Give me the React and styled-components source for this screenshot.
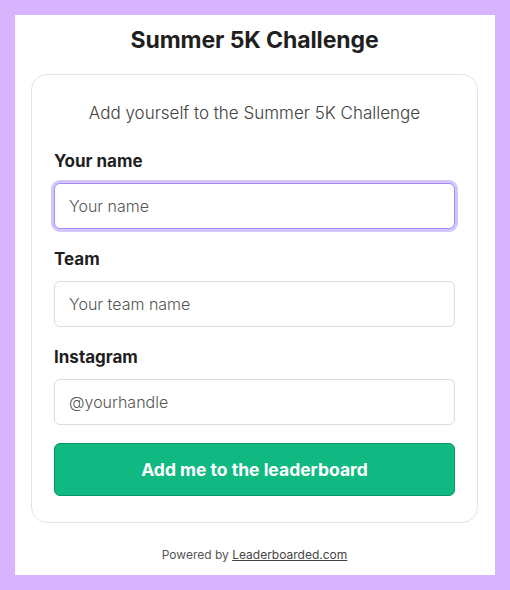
import React from 'react';
import styled, { createGlobalStyle } from 'styled-components';

const GlobalStyle = createGlobalStyle`
    html, body {
        margin: 0;
        background-color: #d8b4fe;
    }
    * {
        box-sizing: border-box;
    }
`;

const Frame = styled.div`
    width: 510px;
    height: 590px;
    padding: 15px;
    font-family: Inter, "Noto Sans", sans-serif;
    color: #1f1f1f;
`;

const Panel = styled.div`
    background-color: white;
    height: 560px;
    padding: 10px 17px 0 16px;
    display: flex;
    flex-direction: column;
`;

const Title = styled.h1`
    margin: 0;
    font-size: 23px;
    line-height: 30px;
    font-weight: 700;
    text-align: center;
    letter-spacing: -0.1px;
`;

const Card = styled.div`
    margin-top: 19px;
    border: 1px solid #e4e4e7;
    border-radius: 16px;
    padding: 26px 22px 26px 22px;
    display: flex;
    flex-direction: column;
`;

const Subtitle = styled.p`
    margin: 0 0 24px 0;
    font-size: 17px;
    line-height: 24px;
    font-weight: 300;
    color: #404040;
    text-align: center;
`;

const Field = styled.div`
    display: flex;
    flex-direction: column;
    margin-bottom: 18px;
`;

const Label = styled.label`
    font-size: 17px;
    line-height: 24px;
    font-weight: 700;
    margin-bottom: 10px;
`;

const Input = styled.input`
    height: 46px;
    width: 100%;
    border-radius: 6px;
    border: 1px solid ${p => (p.$focused ? '#a78bfa' : '#dcdcdc')};
    box-shadow: ${p => (p.$focused ? '0 0 0 3px #d3c6fd' : 'none')};
    padding: 0 14px;
    font-family: inherit;
    font-size: 16px;
    color: #222;
    outline: none;
    &::placeholder {
        color: #555;
        font-weight: 300;
    }
`;

const SubmitBtn = styled.button`
    height: 53px;
    width: 100%;
    border-radius: 6px;
    border: 1px solid #079669;
    background-color: #10b981;
    color: white;
    font-family: inherit;
    font-size: 17.5px;
    font-weight: 700;
    cursor: pointer;
`;

const Footer = styled.div`
    margin-top: 24px;
    text-align: center;
    font-size: 12px;
    line-height: 16px;
    color: #555;
    a {
        color: #444;
        text-decoration: underline;
    }
`;

export default function App() {
    return (
        <Frame>
            <GlobalStyle />
            <Panel>
                <Title>Summer 5K Challenge</Title>
                <Card>
                    <Subtitle>Add yourself to the Summer 5K Challenge</Subtitle>

                    <Field>
                        <Label>Your name</Label>
                        <Input $focused placeholder="Your name" />
                    </Field>

                    <Field>
                        <Label>Team</Label>
                        <Input placeholder="Your team name" />
                    </Field>

                    <Field>
                        <Label>Instagram</Label>
                        <Input placeholder="@yourhandle" />
                    </Field>

                    <SubmitBtn type="button">Add me to the leaderboard</SubmitBtn>
                </Card>
                <Footer>
                    Powered by <a href="#">Leaderboarded.com</a>
                </Footer>
            </Panel>
        </Frame>
    );
}
